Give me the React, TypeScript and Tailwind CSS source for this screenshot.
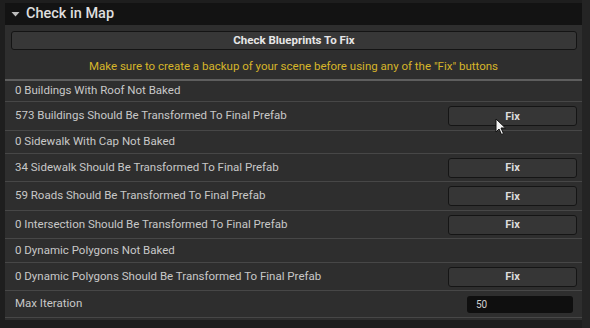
import React from "react"

type Row = {
  label: string
  h: number
  kind?: "fix" | "input"
}

const rows: Row[] = [
  { label: "0 Buildings With Roof Not Baked", h: 20 },
  { label: "573 Buildings Should Be Transformed To Final Prefab", h: 28, kind: "fix" },
  { label: "0 Sidewalk With Cap Not Baked", h: 22 },
  { label: "34 Sidewalk Should Be Transformed To Final Prefab", h: 27, kind: "fix" },
  { label: "59 Roads Should Be Transformed To Final Prefab", h: 28, kind: "fix" },
  { label: "0 Intersection Should Be Transformed To Final Prefab", h: 27, kind: "fix" },
  { label: "0 Dynamic Polygons Not Baked", h: 23 },
  { label: "0 Dynamic Polygons Should Be Transformed To Final Prefab", h: 27, kind: "fix" },
  { label: "Max Iteration", h: 26, kind: "input" },
]

function Cursor() {
  return (
    <svg className="absolute left-[495px] top-[118px]" width="12" height="18" viewBox="0 0 12 18">
      <path d="M1 1 L1 14 L4 11 L6.5 16.5 L8.5 15.5 L6 10 L10.5 10 Z" fill="#f2f2f2" stroke="#111" strokeWidth="1" />
    </svg>
  )
}

export default function App() {
  return (
    <div
      className="relative w-[590px] h-[328px] bg-[#1e1e1e] flex overflow-hidden"
      style={{ fontFamily: "Roboto, 'Liberation Sans', sans-serif" }}
    >
      <div className="w-[5px] shrink-0" />
      <div className="w-[577px] shrink-0 flex flex-col pt-[3px]">
        {/* Header */}
        <div className="h-[22px] bg-[#131313] flex items-center gap-[6px] pl-[6px]">
          <svg width="9" height="6" viewBox="0 0 9 6">
            <path d="M0.5 1 L8.5 1 L4.5 5.5 Z" fill="#bdbdbd" />
          </svg>
          <span className="text-[14.5px] font-medium text-[#dedede] leading-none">Check in Map</span>
        </div>

        {/* Body */}
        <div className="bg-[#2e2e2e] flex flex-col">
          <div className="pt-[6px] pl-[6px] pr-[5px]">
            <button className="block w-full h-[19px] rounded-[3px] border border-[#141414] bg-[#373737] text-[11.5px] font-bold text-[#e6e6e6] leading-none">
              Check Blueprints To Fix
            </button>
          </div>
          <div className="h-[29px] flex items-center justify-center pt-[5px] text-[11.5px] text-[#d6b52a]">
            Make sure to create a backup of your scene before using any of the "Fix" buttons
          </div>
          <div className="h-[2px] bg-[#5e5e5e]" />

          {rows.map((row) => (
            <div
              key={row.label}
              className="flex items-center justify-between border-b border-[#474747] pl-[10px]"
              style={{ height: row.h + 1 }}
            >
              <span className="text-[11.5px] text-[#c8c8c8]">{row.label}</span>
              {row.kind === "fix" && (
                <button className="block mr-[5px] w-[129px] h-[20px] rounded-[3px] border border-[#151515] bg-[#363636] text-[11px] font-bold text-[#dcdcdc] leading-none">
                  Fix
                </button>
              )}
              {row.kind === "input" && (
                <div className="mr-[9px] w-[106px] h-[17px] rounded-[3px] bg-[#0f0f0f] flex items-center pl-[9px] text-[10px] text-[#cfcfcf]">
                  50
                </div>
              )}
            </div>
          ))}
          <div className="h-[2px]" />
        </div>
      </div>
      <div className="flex-1 bg-[#242424]" />
      <Cursor />
    </div>
  )
}
